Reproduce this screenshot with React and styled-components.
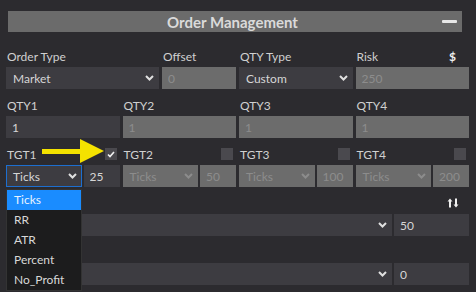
import React from "react";
import styled, { createGlobalStyle } from "styled-components";

const GlobalStyle = createGlobalStyle`
  html, body {
    margin: 0;
    background: #2c2b2f;
  }
  body {
    font-family: Lato, "Open Sans", sans-serif;
    font-size: 12px;
    color: #d2d2d2;
  }
`;

const Page = styled.div`
  position: relative;
  width: 476px;
  height: 292px;
  box-sizing: border-box;
  padding: 11px 7px 0 6px;
  overflow: hidden;
`;

const Header = styled.div`
  display: grid;
  grid-template-columns: 1fr auto 1fr;
  align-items: center;
  height: 21px;
  margin: 0 7px 8px 2px;
  padding-right: 5px;
  background: #6b6b6b;
`;

const Title = styled.div`
  grid-column: 2;
  font-size: 15px;
  font-weight: 700;
  color: #dadada;
`;

const Minus = styled.span`
  justify-self: end;
  width: 15px;
  height: 3px;
  border-radius: 1px;
  background: #e8e8e8;
`;

const Row = styled.div`
  display: grid;
  grid-template-columns: ${(p) => p.$cols || "repeat(4, 1fr)"};
  column-gap: 3px;
`;

const Field = styled.div`
  position: relative;
  display: flex;
  flex-direction: column;
  min-width: 0;
`;

const Label = styled.div`
  display: flex;
  align-items: center;
  justify-content: ${(p) => (p.$end ? "flex-end" : "space-between")};
  height: 16px;
  margin-top: 8px;
  margin-bottom: 3px;
  padding-left: 1px;
  padding-right: ${(p) => p.$pr || 3}px;
  color: #d0d0d0;
`;

const Pair = styled.div`
  display: grid;
  grid-template-columns: ${(p) => p.$cols || "1fr 36px"};
  column-gap: 2px;
`;

const Select = styled.div`
  display: flex;
  align-items: center;
  justify-content: space-between;
  height: 22px;
  box-sizing: border-box;
  padding: 0 4px 0 6px;
  background: ${(p) => (p.$disabled ? "#6c6c6c" : "#3d3c41")};
  color: ${(p) => (p.$disabled ? "#8c8c8c" : "#d6d6d6")};
  border: 1px solid ${(p) => (p.$focus ? "#1d6fd0" : "transparent")};
`;

const Input = styled.input`
  width: 100%;
  height: 22px;
  box-sizing: border-box;
  margin: 0;
  padding: 0 6px;
  border: none;
  outline: none;
  font: inherit;
  background: ${(p) => (p.$disabled ? "#6c6c6c" : "#3d3c41")};
  color: ${(p) => (p.$disabled ? "#8c8c8c" : "#d6d6d6")};
  -webkit-text-fill-color: ${(p) => (p.$disabled ? "#8c8c8c" : "#d6d6d6")};
`;

const Check = styled.span`
  display: flex;
  align-items: center;
  justify-content: center;
  width: 12px;
  height: 12px;
  background: #4a494e;
`;

const Dollar = styled.span`
  margin-right: 10px;
  font-weight: 700;
  color: #f0f0f0;
`;

const Menu = styled.div`
  position: absolute;
  top: calc(100% + 2px);
  left: 0;
  width: 76px;
  box-sizing: border-box;
  background: #1c1c1d;
  border: 1px solid #333;
  z-index: 2;
`;

const Option = styled.div`
  height: 20px;
  line-height: 20px;
  padding-left: 7px;
  background: ${(p) => (p.$active ? "#1a8cff" : "transparent")};
  color: ${(p) => (p.$active ? "#e8f2ff" : "#d8d8d8")};
`;

const Pointer = styled.svg`
  position: absolute;
  left: 42px;
  top: 139px;
  z-index: 3;
`;

const Chevron = ({ muted }) => (
  <svg width="9" height="6" viewBox="0 0 9 6">
    <path d="M1 1 L4.5 4.5 L8 1" fill="none" stroke={muted ? "#8c8c8c" : "#e0e0e0"} strokeWidth="2" />
  </svg>
);

const CheckBox = ({ checked }) => (
  <Check>
    {checked && (
      <svg width="8" height="7" viewBox="0 0 8 7">
        <path d="M1 3.5 L3 5.5 L7 1" fill="none" stroke="#f2f2f2" strokeWidth="1.6" />
      </svg>
    )}
  </Check>
);

const SortIcon = () => (
  <svg width="12" height="10" viewBox="0 0 12 10">
    <path d="M3 9.5 V2" stroke="#f0f0f0" strokeWidth="2" />
    <path d="M0.5 3.5 L3 0.5 L5.5 3.5 Z" fill="#f0f0f0" />
    <path d="M9 0.5 V8" stroke="#f0f0f0" strokeWidth="2" />
    <path d="M6.5 6.5 L9 9.5 L11.5 6.5 Z" fill="#f0f0f0" />
  </svg>
);

const targets = [
  { name: "TGT1", value: "25", on: true },
  { name: "TGT2", value: "50" },
  { name: "TGT3", value: "100" },
  { name: "TGT4", value: "200" },
];

const options = ["Ticks", "RR", "ATR", "Percent", "No_Profit"];

const App = () => {
  return (
    <>
      <GlobalStyle />
      <Page>
        <Header>
          <Title>Order Management</Title>
          <Minus />
        </Header>

        <Row $cols="153px 74px 1fr 1fr">
          <Field>
            <Label>Order Type</Label>
            <Select>
              Market <Chevron />
            </Select>
          </Field>
          <Field>
            <Label>Offset</Label>
            <Input $disabled disabled defaultValue="0" />
          </Field>
          <Field>
            <Label>QTY Type</Label>
            <Select>
              Custom <Chevron />
            </Select>
          </Field>
          <Field>
            <Label>
              Risk <Dollar>$</Dollar>
            </Label>
            <Input $disabled disabled defaultValue="250" />
          </Field>
        </Row>

        <Row>
          {["QTY1", "QTY2", "QTY3", "QTY4"].map((q, i) => (
            <Field key={q}>
              <Label>{q}</Label>
              <Input $disabled={i > 0} disabled={i > 0} defaultValue="1" />
            </Field>
          ))}
        </Row>

        <Row>
          {targets.map((t) => (
            <Field key={t.name}>
              <Label>
                {t.name} <CheckBox checked={t.on} />
              </Label>
              <Pair>
                <Field>
                  <Select $disabled={!t.on} $focus={t.on}>
                    Ticks <Chevron muted={!t.on} />
                  </Select>
                  {t.on && (
                    <Menu>
                      {options.map((o) => (
                        <Option key={o} $active={o === "Ticks"}>
                          {o}
                        </Option>
                      ))}
                    </Menu>
                  )}
                </Field>
                <Input $disabled={!t.on} disabled={!t.on} defaultValue={t.value} />
              </Pair>
            </Field>
          ))}
        </Row>

        <Row $cols="1fr">
          <Field>
            <Label $end $pr={10}>
              <SortIcon />
            </Label>
            <Pair $cols="1fr 75px">
              <Select $end>
                <span />
                <Chevron />
              </Select>
              <Input defaultValue="50" />
            </Pair>
          </Field>
        </Row>

        <Row $cols="1fr">
          <Field>
            <Label />
            <Pair $cols="1fr 75px">
              <Select>
                <span />
                <Chevron />
              </Select>
              <Input defaultValue="0" />
            </Pair>
          </Field>
        </Row>

        <Pointer width="62" height="24" viewBox="0 0 62 24">
          <rect x="0" y="10" width="40" height="5" fill="#f4e200" />
          <polygon points="38,0 62,12 38,24" fill="#f4e200" />
        </Pointer>
      </Page>
    </>
  );
};

export default App;
